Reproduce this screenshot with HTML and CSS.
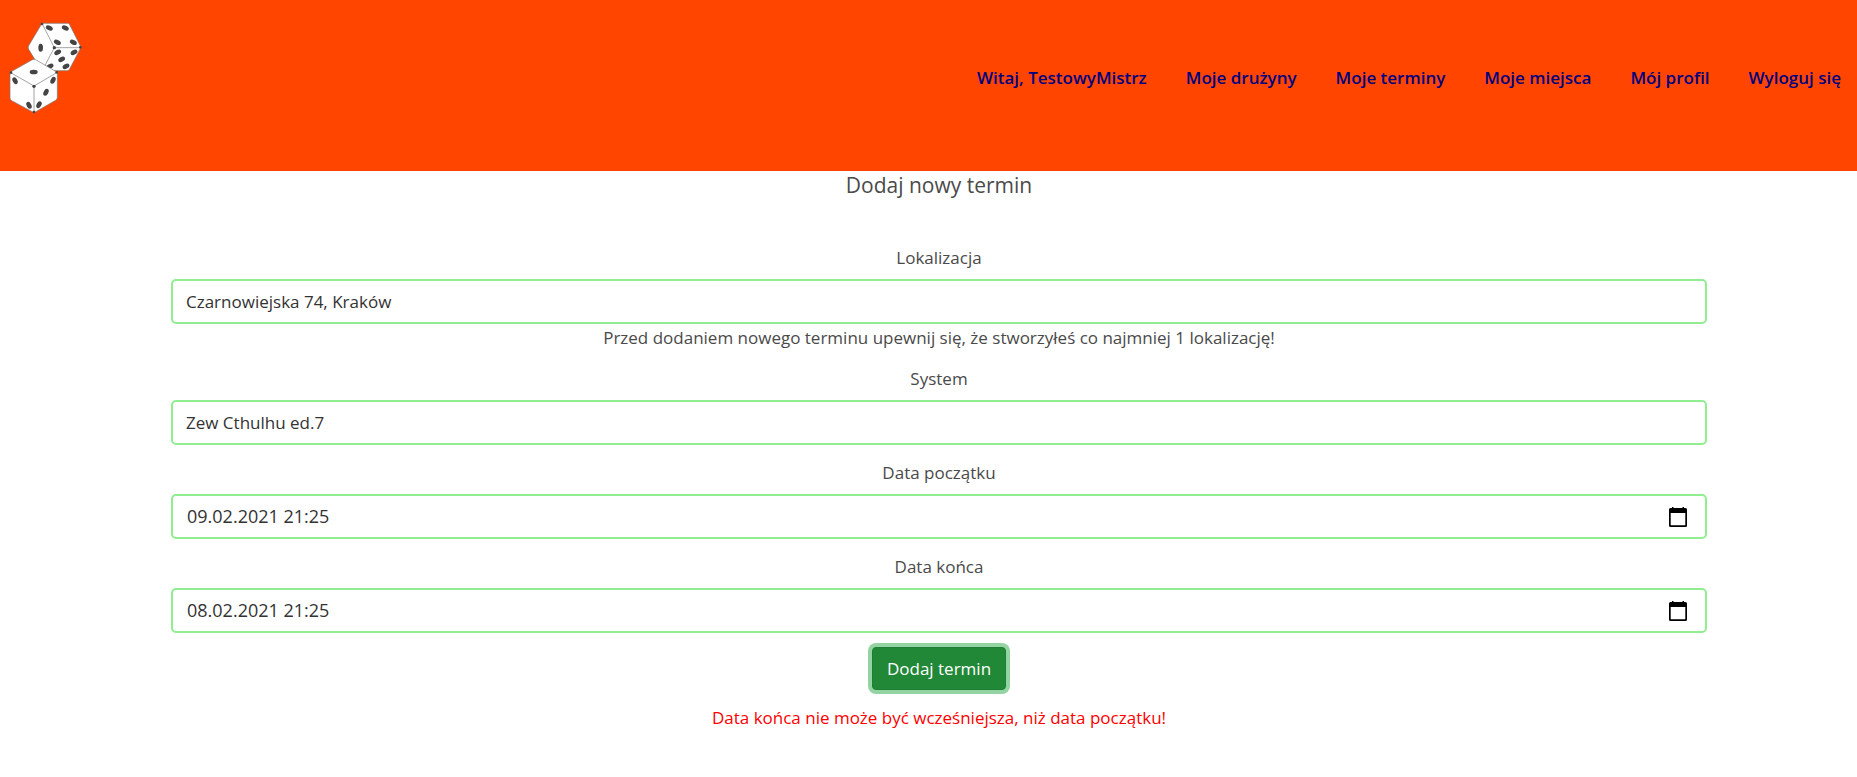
FILE: index.html
```html
<!DOCTYPE html>
<html lang="pl">
<head>
<meta charset="utf-8">
<title>Dodaj nowy termin</title>
<link rel="stylesheet" href="styles.css">
</head>
<body>
<header class="header">
  <a class="logo" href="#" aria-label="Strona główna">
    <svg class="logo-image" viewBox="24 30 228 285" aria-hidden="true">
      <g fill="#fff" stroke="#777" stroke-width="2" stroke-linejoin="round">
        <path d="M126 40H203Q207 40 209 44L243 112L209 177Q206 182 202 182H125L86 118Q83 112 86 107Z"/>
        <path d="M126 40L163 113H243M163 113L133 170" fill="none"/>
      </g>
      <g fill="#444">
        <ellipse cx="148" cy="54" rx="11" ry="7" transform="rotate(25 148 54)"/>
        <ellipse cx="196" cy="54" rx="11" ry="7" transform="rotate(25 196 54)"/>
        <ellipse cx="172" cy="97" rx="11" ry="7" transform="rotate(25 172 97)"/>
        <ellipse cx="220" cy="97" rx="11" ry="7" transform="rotate(25 220 97)"/>
        <ellipse cx="122" cy="113" rx="7" ry="12"/>
        <ellipse cx="173" cy="127" rx="11" ry="7" transform="rotate(-30 173 127)"/>
        <ellipse cx="222" cy="127" rx="11" ry="7" transform="rotate(-30 222 127)"/>
        <ellipse cx="185" cy="148" rx="11" ry="7" transform="rotate(-30 185 148)"/>
        <ellipse cx="150" cy="169" rx="11" ry="7" transform="rotate(-25 150 169)"/>
        <ellipse cx="198" cy="169" rx="11" ry="7" transform="rotate(-30 198 169)"/>
        <circle cx="126" cy="42" r="4"/><circle cx="163" cy="113" r="5"/><circle cx="241" cy="112" r="4"/>
      </g>
      <g fill="#fff" stroke="#777" stroke-width="2" stroke-linejoin="round">
        <path d="M97 149Q102 146 107 149L172 187V262Q172 268 167 271L102 308L35 272Q30 269 30 263V187Z"/>
        <path d="M30 187L102 228L172 187M102 228V308" fill="none"/>
      </g>
      <g fill="#444">
        <ellipse cx="101" cy="186" rx="12" ry="7"/>
        <ellipse cx="45" cy="212" rx="7" ry="11" transform="rotate(-28 45 212)"/>
        <ellipse cx="87" cy="286" rx="7" ry="11" transform="rotate(-28 87 286)"/>
        <ellipse cx="159" cy="211" rx="7" ry="11" transform="rotate(28 159 211)"/>
        <ellipse cx="138" cy="247" rx="7" ry="11" transform="rotate(28 138 247)"/>
        <ellipse cx="117" cy="284" rx="7" ry="11" transform="rotate(28 117 284)"/>
        <circle cx="102" cy="229" r="5"/><circle cx="33" cy="188" r="4"/><circle cx="170" cy="187" r="4"/><circle cx="102" cy="306" r="4"/>
      </g>
    </svg>
  </a>
  <nav class="nav">
    <a class="nav-link" href="#">Witaj, TestowyMistrz</a>
    <a class="nav-link" href="#">Moje drużyny</a>
    <a class="nav-link" href="#">Moje terminy</a>
    <a class="nav-link" href="#">Moje miejsca</a>
    <a class="nav-link" href="#">Mój profil</a>
    <a class="nav-link" href="#">Wyloguj się</a>
  </nav>
</header>
<main class="content">
  <h1 class="title">Dodaj nowy termin</h1>
  <form class="form">
    <div class="group">
      <label class="label" for="place">Lokalizacja</label>
      <input class="control" id="place" type="text" value="Czarnowiejska 74, Kraków" aria-describedby="place-hint">
      <p class="hint" id="place-hint">Przed dodaniem nowego terminu upewnij się, że stworzyłeś co najmniej 1 lokalizację!</p>
    </div>
    <div class="group">
      <label class="label" for="system">System</label>
      <input class="control" id="system" type="text" value="Zew Cthulhu ed.7">
    </div>
    <div class="group">
      <label class="label" for="start">Data początku</label>
      <div class="control date-control">
        <input class="date-input" id="start" type="text" value="09.02.2021 21:25">
        <button class="picker" type="button" aria-label="Wybierz datę początku">
          <svg class="picker-icon" viewBox="0 0 20 20" aria-hidden="true"><path fill-rule="evenodd" d="M4 0h1.500v1h9V0H16v1h1.500a1.500 1.500 0 0 1 1.500 1.500v16a1.500 1.500 0 0 1-1.500 1.500h-15A1.500 1.500 0 0 1 1 18.500v-16A1.500 1.500 0 0 1 2.500 1H4zM2.700 6v12.200h14.600V6z"/></svg>
        </button>
      </div>
    </div>
    <div class="group">
      <label class="label" for="end">Data końca</label>
      <div class="control date-control">
        <input class="date-input" id="end" type="text" value="08.02.2021 21:25">
        <button class="picker" type="button" aria-label="Wybierz datę końca">
          <svg class="picker-icon" viewBox="0 0 20 20" aria-hidden="true"><path fill-rule="evenodd" d="M4 0h1.500v1h9V0H16v1h1.500a1.500 1.500 0 0 1 1.500 1.500v16a1.500 1.500 0 0 1-1.500 1.500h-15A1.500 1.500 0 0 1 1 18.500v-16A1.500 1.500 0 0 1 2.500 1H4zM2.700 6v12.200h14.600V6z"/></svg>
        </button>
      </div>
    </div>
    <button class="submit" type="submit">Dodaj termin</button>
    <p class="error" role="alert">Data końca nie może być wcześniejsza, niż data początku!</p>
  </form>
</main>
</body>
</html>
```
FILE: styles.css
```css
* {
  box-sizing: border-box;
}

body {
  margin: 0;
  background: #fff;
  color: #4a4a4a;
  font-family: "Open Sans", "Noto Sans", sans-serif;
  font-size: 17px;
  line-height: 27px;
}

.header {
  display: flex;
  justify-content: space-between;
  align-items: flex-start;
  min-height: 171px;
  padding: 20px 16px 0 8px;
  background: #ff4500;
}

.logo-image {
  display: block;
  width: 76px;
  height: 95px;
}

.nav {
  display: flex;
  gap: 39px;
  padding-top: 44px;
}

.nav-link {
  color: #000080;
  font-weight: 600;
  text-decoration: none;
  white-space: nowrap;
}

.content {
  padding: 0 150px 32px 171px;
  text-align: center;
}

.title {
  margin: 0 0 45px;
  font-size: 21px;
  font-weight: 400;
  line-height: 28px;
}

.form {
  display: flex;
  flex-direction: column;
  align-items: center;
}

.group {
  width: 100%;
  margin-bottom: 14px;
}

.label {
  display: block;
  margin-bottom: 8px;
}

.control {
  display: block;
  width: 100%;
  height: 45px;
  padding: 0 13px;
  border: 2px solid #90ee90;
  border-radius: 5px;
  background: #fff;
  color: #333;
  font: inherit;
}

.date-control {
  display: flex;
  align-items: center;
  justify-content: space-between;
  padding: 0 17px 0 14px;
}

.date-input {
  flex: 1;
  min-width: 0;
  padding: 0;
  border: 0;
  background: none;
  color: inherit;
  font: inherit;
  font-size: 18px;
}

.picker {
  padding: 0;
  border: 0;
  background: none;
}

.picker-icon {
  display: block;
  width: 20px;
  height: 20px;
}

.hint,
.error {
  margin: 0;
}

.submit {
  padding: 7px 14px;
  border: 1px solid #1e7e34;
  border-radius: 4px;
  background: #218838;
  box-shadow: 0 0 0 4px #94d3a2;
  color: #fff;
  font: inherit;
}

.error {
  margin-top: 14px;
  color: #f00;
}
```
